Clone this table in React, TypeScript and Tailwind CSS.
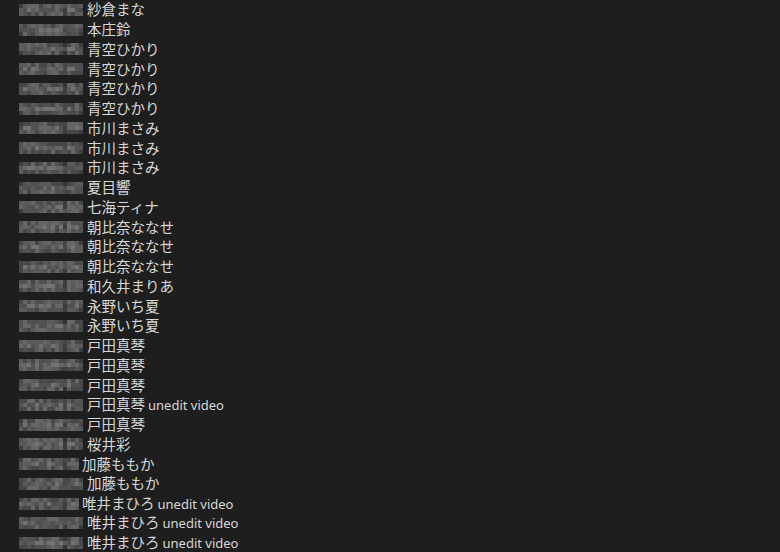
import React from 'react';

type Row = { name: string; note?: string; narrow?: boolean };

const rows: Row[] = [
  { name: '紗倉まな' },
  { name: '本庄鈴' },
  { name: '青空ひかり' },
  { name: '青空ひかり' },
  { name: '青空ひかり' },
  { name: '青空ひかり' },
  { name: '市川まさみ' },
  { name: '市川まさみ' },
  { name: '市川まさみ' },
  { name: '夏目響' },
  { name: '七海ティナ' },
  { name: '朝比奈ななせ' },
  { name: '朝比奈ななせ' },
  { name: '朝比奈ななせ' },
  { name: '和久井まりあ' },
  { name: '永野いち夏' },
  { name: '永野いち夏' },
  { name: '戸田真琴' },
  { name: '戸田真琴' },
  { name: '戸田真琴' },
  { name: '戸田真琴', note: 'unedit video' },
  { name: '戸田真琴' },
  { name: '桜井彩' },
  { name: '加藤ももか', narrow: true },
  { name: '加藤ももか' },
  { name: '唯井まひろ', note: 'unedit video', narrow: true },
  { name: '唯井まひろ', note: 'unedit video' },
  { name: '唯井まひろ', note: 'unedit video' },
];

// mosaic shades, darkest to lightest
const shades = [
  'bg-[#2a2a2a]',
  'bg-[#333333]',
  'bg-[#3d3d3d]',
  'bg-[#474747]',
  'bg-[#515151]',
  'bg-[#5b5b5b]',
  'bg-[#666666]',
  'bg-[#727272]',
];

const rand = (seed: number) => {
  const x = Math.sin(seed * 12.9898 + 78.233) * 43758.5453;
  return x - Math.floor(x);
};

const Mosaic = ({ index, narrow }: { index: number; narrow?: boolean }) => {
  const cols = narrow ? 15 : 16;
  const cells = [];
  for (let r = 0; r < 3; r++) {
    for (let c = 0; c < cols; c++) {
      const edge = r === 0 || r === 2 ? 1 : 0;
      const gap = c === 11 ? 2 : 0;
      let v = Math.floor(rand(index * 97 + r * 31 + c * 7) * 4) + 4 - edge - gap;
      if (c === 0 || c === cols - 1) v -= 1;
      v = Math.max(0, Math.min(shades.length - 1, v));
      cells.push(<div key={`${r}-${c}`} className={`h-1 w-1 ${shades[v]}`} />);
    }
  }
  return (
    <div
      className={narrow ? 'grid h-3 w-[60px] grid-cols-[repeat(15,4px)]' : 'grid h-3 w-16 grid-cols-[repeat(16,4px)]'}
    >
      {cells}
    </div>
  );
};

export default function App() {
  return (
    <div className="h-[552px] w-[780px] overflow-hidden bg-[#1e1e1e] text-[#d8d8d8] font-['Segoe_UI','Noto_Sans_CJK_JP','Noto_Sans',sans-serif]">
      {rows.map((row, i) => (
        <div key={i} className="flex h-[19.75px] items-center pl-[19px]">
          <Mosaic index={i} narrow={row.narrow} />
          <span className={row.narrow ? 'ml-[3px] flex items-baseline pb-[1px] text-[14.5px] leading-[18px]' : 'ml-[4px] flex items-baseline pb-[1px] text-[14.5px] leading-[18px]'}>
            {row.name}
            {row.note && (
              <span className="ml-[3px] text-[13px] font-['Noto_Sans',sans-serif]">{row.note}</span>
            )}
          </span>
        </div>
      ))}
    </div>
  );
}
